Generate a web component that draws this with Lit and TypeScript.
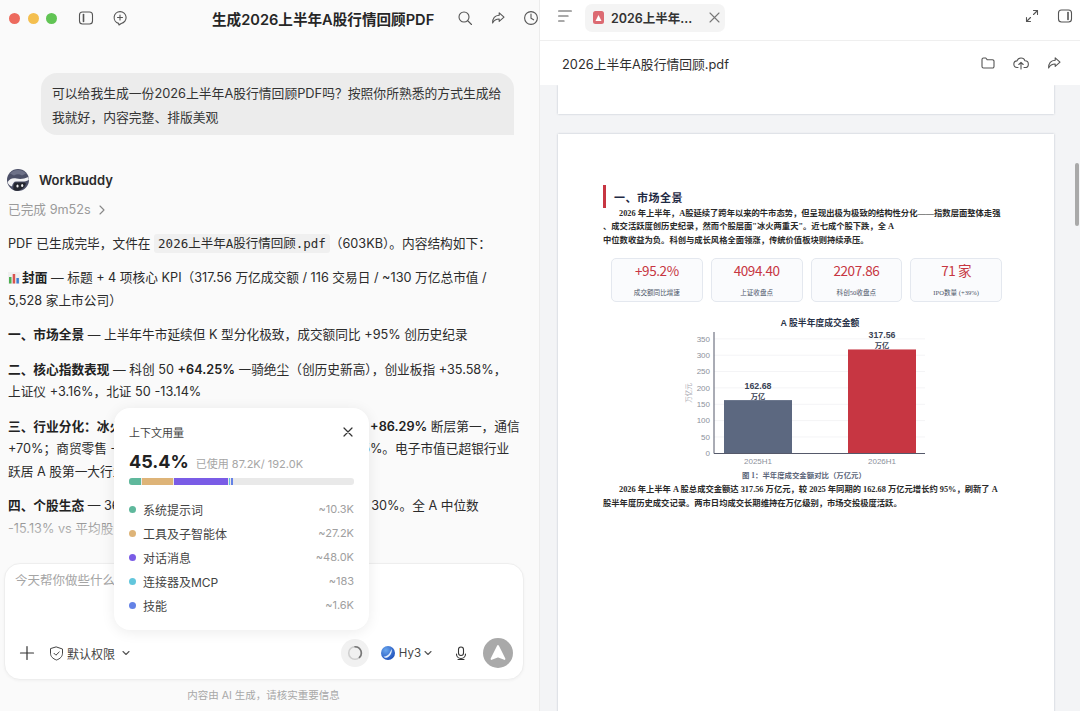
import { LitElement, css, html, svg } from "lit";
import { customElement } from "lit/decorators.js";

const usage = [
  { name: "系统提示词", value: "~10.3K", color: "#5fb89c" },
  { name: "工具及子智能体", value: "~27.2K", color: "#deb478" },
  { name: "对话消息", value: "~48.0K", color: "#7a5ce6" },
  { name: "连接器及MCP", value: "~183", color: "#62c6dc" },
  { name: "技能", value: "~1.6K", color: "#6482e6" },
];

const kpis = [
  { value: "+95.2%", label: "成交额同比增速" },
  { value: "4094.40", label: "上证收盘点" },
  { value: "2207.86", label: "科创50收盘点" },
  { value: "71 家", label: "IPO数量 (+39%)" },
];

const chartY = (v: number) => 138.3 - v * 0.327;

const icon = (body: unknown, size = 16) =>
  html`<svg
    width=${size}
    height=${size}
    viewBox="0 0 16 16"
    fill="none"
    stroke="currentColor"
    stroke-width="1.1"
    stroke-linecap="round"
    stroke-linejoin="round"
  >
    ${body}
  </svg>`;

const shareIcon = svg`<path d="M9.2 2.8 14 7.2l-4.8 4.2V9c-3 0-5 .9-6.6 4 0-4.4 2.2-7.4 6.6-7.7z" />`;

@customElement("app-root")
export class AppRoot extends LitElement {
  public static styles = css`
    :host {
      display: block;
      width: 1080px;
      height: 711px;
      overflow: hidden;
      font-family: Inter, "Noto Sans CJK SC", sans-serif;
      color: #2b2b2b;
    }

    .window {
      display: flex;
      height: 711px;
    }

    /* left: conversation */
    .chat {
      position: relative;
      display: flex;
      flex-direction: column;
      width: 539px;
      background: #fafafa;
      border-right: 1px solid #ececec;
    }

    .chat-header {
      display: flex;
      flex: none;
      align-items: center;
      height: 36px;
      padding-left: 9px;
      overflow: hidden;
      color: #555;
    }

    .chat-header svg {
      flex: none;
    }

    .lights {
      display: flex;
      flex: none;
      gap: 7.5px;
      margin-right: 21px;
    }

    .lights i {
      width: 11px;
      height: 11px;
      border-radius: 50%;
    }

    .header-gap {
      flex: none;
      width: 18px;
    }

    .chat-title {
      flex: none;
      margin: 0 23px 0 84px;
      font-size: 14.6px;
      font-weight: 600;
      color: #262626;
      white-space: nowrap;
    }

    .header-icons {
      display: flex;
      gap: 17px;
      flex: none;
    }

    .messages {
      position: relative;
      flex: 1;
      min-height: 0;
      padding: 37px 8px 0;
      overflow: hidden;
      font-size: 12.7px;
      line-height: 22.5px;
      white-space: nowrap;
    }

    .bubble {
      width: 449px;
      margin-left: 33px;
      padding: 8.5px 13px 5.5px 11px;
      background: #ececec;
      border-radius: 16px 16px 0 16px;
      font-size: 12.8px;
      line-height: 24px;
      color: #333;
    }

    .agent {
      display: flex;
      align-items: center;
      gap: 10px;
      margin: 34px 0 0 -1px;
      font-size: 13px;
      font-weight: 600;
      line-height: 22px;
    }

    .elapsed {
      display: flex;
      align-items: center;
      gap: 6px;
      margin: 8px 0 11.5px;
      color: #9a9a9a;
      line-height: 22px;
    }

    .messages p {
      margin: 0 0 12px;
    }

    .messages b {
      font-weight: 600;
      color: #222;
    }

    code {
      padding: 2px 4px;
      background: #f0f0f0;
      border-radius: 3px;
      font-family: "DejaVu Sans Mono", "Noto Sans CJK SC", monospace;
      font-size: 12.5px;
    }

    .chart-emoji {
      vertical-align: -2px;
      margin-right: 2px;
    }

    .dim {
      color: #777;
    }

    .fade {
      position: absolute;
      left: 0;
      right: 0;
      bottom: 0;
      height: 50px;
      background: linear-gradient(to bottom, rgba(250, 250, 250, 0), #fafafa 80%);
    }

    .composer {
      position: relative;
      display: flex;
      flex: none;
      flex-direction: column;
      justify-content: space-between;
      height: 117px;
      margin: 0 15px 0 4px;
      box-sizing: border-box;
      background: #fff;
      border: 1px solid #eee;
      border-radius: 16px;
      box-shadow: 0 1px 3px rgba(0, 0, 0, 0.04);
    }

    .placeholder {
      padding: 7px 10px;
      font-size: 12.5px;
      line-height: 20px;
      color: #a5a5a5;
    }

    .toolbar {
      display: flex;
      align-items: center;
      height: 30px;
      padding: 0 10px 11px 14px;
      font-size: 12px;
      color: #444;
    }

    .plus-gap {
      width: 14px;
    }

    .perm {
      margin-left: 3px;
    }

    .perm-chevron {
      margin-left: 6px;
    }

    .spacer {
      flex: 1;
    }

    .spinner {
      display: flex;
      align-items: center;
      justify-content: center;
      width: 28px;
      height: 28px;
      margin-right: 12px;
      border-radius: 50%;
      background: #f1f1f1;
    }

    .model {
      margin-left: 4px;
      font-size: 11.5px;
    }

    .model-chevron {
      margin-left: 2px;
    }

    .mic {
      margin-left: 21px;
    }

    .send {
      display: flex;
      align-items: center;
      justify-content: center;
      width: 30px;
      height: 30px;
      margin-left: 15px;
      border-radius: 50%;
      background: #a9a9a9;
    }

    .disclaimer {
      flex: none;
      height: 31px;
      padding-right: 12px;
      font-size: 10.5px;
      line-height: 31px;
      text-align: center;
      color: #a8a8a8;
    }

    /* context usage popover */
    .usage {
      position: absolute;
      left: 114px;
      top: 408px;
      z-index: 2;
      width: 255px;
      height: 222px;
      box-sizing: border-box;
      padding: 15px 15px 0;
      background: #fff;
      border-radius: 16px;
      box-shadow: 0 2px 14px rgba(0, 0, 0, 0.08);
    }

    .usage-head {
      display: flex;
      align-items: center;
      justify-content: space-between;
      height: 18px;
      font-size: 11px;
      color: #444;
    }

    .usage-total {
      display: flex;
      align-items: baseline;
      gap: 7px;
      height: 30px;
      margin-top: 6px;
      font-size: 11px;
      line-height: 30px;
      color: #a6a6a6;
    }

    .usage-total strong {
      font-size: 18px;
      font-weight: 700;
      color: #222;
    }

    .usage-bar {
      display: flex;
      gap: 1px;
      height: 7px;
      margin-top: 1px;
      overflow: hidden;
      background: #e9e9e9;
      border-radius: 3px;
    }

    .usage-bar i {
      display: block;
      height: 100%;
    }

    .usage-rows {
      margin-top: 12px;
    }

    .usage-row {
      display: flex;
      align-items: center;
      height: 24px;
      font-size: 12px;
      color: #444;
    }

    .usage-row i {
      width: 7px;
      height: 7px;
      margin-right: 7px;
      border-radius: 50%;
    }

    .usage-row span {
      margin-left: auto;
      font-size: 11px;
      color: #a0a0a0;
    }

    /* right: file preview */
    .preview {
      display: flex;
      flex: 1;
      flex-direction: column;
      min-width: 0;
      background: #fff;
    }

    .tabbar {
      display: flex;
      flex: none;
      align-items: center;
      gap: 13px;
      height: 32px;
      padding: 0 7px 8px 18px;
      border-bottom: 1px solid #efefef;
      color: #555;
    }

    .tab {
      display: flex;
      align-items: center;
      gap: 7px;
      width: 140px;
      height: 28px;
      margin-top: 3px;
      padding-left: 8px;
      box-sizing: border-box;
      background: #f4f4f4;
      border-radius: 7px;
      font-size: 12.5px;
      font-weight: 600;
      color: #333;
      white-space: nowrap;
    }

    .tab svg:last-child {
      margin-left: 10px;
      color: #777;
    }

    .tabbar .right {
      display: flex;
      gap: 17px;
      margin-left: auto;
    }

    .filebar {
      display: flex;
      flex: none;
      align-items: center;
      justify-content: space-between;
      height: 44px;
      padding: 0 18px 0 22px;
      font-size: 12.8px;
      color: #2f2f2f;
    }

    .filebar div {
      display: flex;
      gap: 17px;
      color: #555;
    }

    .viewer {
      position: relative;
      flex: 1;
      min-height: 0;
      overflow: hidden;
      padding-left: 18px;
      background: #f3f4f6;
    }

    .sheet {
      width: 496px;
      background: #fff;
      box-shadow: 0 0 2px rgba(120, 130, 150, 0.45);
    }

    .sheet.prev {
      height: 29px;
    }

    .sheet.page {
      height: 700px;
      margin-top: 20px;
      padding: 51px 52px 0 45px;
      box-sizing: border-box;
      font-family: "Liberation Serif", "Noto Sans CJK SC", serif;
      font-size: 8.3px;
      font-weight: 700;
      line-height: 13.4px;
      color: #2a2a2a;
      white-space: nowrap;
    }

    .thumb {
      position: absolute;
      top: 78px;
      right: 1px;
      width: 4.5px;
      height: 63px;
      border-radius: 3px;
      background: #a9a9a9;
    }

    .sheet h2 {
      display: flex;
      align-items: center;
      height: 23px;
      margin: 0 0 -1px;
      padding: 3px 0 0 8px;
      box-sizing: border-box;
      border-left: 3px solid #c73642;
      font-family: "Noto Sans CJK SC", sans-serif;
      font-size: 11px;
      font-weight: 700;
      letter-spacing: 0.5px;
      color: #1f2a44;
    }

    .sheet p {
      margin: 0;
    }

    .indent {
      text-indent: 16px;
    }

    .kpis {
      display: grid;
      grid-template-columns: repeat(4, 1fr);
      gap: 8px;
      margin: 11px 0 0 8px;
    }

    .kpi {
      height: 44px;
      box-sizing: border-box;
      padding-top: 1px;
      background: #fafbfd;
      border: 1px solid #e4e8ef;
      border-radius: 5px;
      text-align: center;
    }

    .kpi strong {
      display: block;
      font-family: "Noto Sans CJK SC", sans-serif;
      font-size: 13.5px;
      font-weight: 400;
      line-height: 20px;
      letter-spacing: -0.4px;
      color: #c73642;
    }

    .kpi span {
      display: block;
      margin-top: 8px;
      font-size: 6.6px;
      font-weight: 400;
      line-height: 10px;
      color: #4a5568;
    }

    .chart {
      display: block;
      margin-top: 13px;
    }

    .chart text {
      font-family: "Liberation Sans", "Noto Sans CJK SC", sans-serif;
    }

    .caption {
      padding-left: 3px;
      font-size: 7.4px;
      line-height: 14px;
      text-align: center;
      color: #5a6478;
    }

    .after-chart {
      margin-top: 12px;
    }
  `;

  private renderChart() {
    const ticks = [0, 50, 100, 150, 200, 250, 300, 350];
    const bars = [
      { x: 121, v: 162.68, color: "#5c6880", label: "2025H1" },
      { x: 245, v: 317.56, color: "#c73642", label: "2026H1" },
    ];
    return html`<svg class="chart" width="399" height="154" viewBox="0 0 399 154">
      <text x="217" y="11" text-anchor="middle" font-size="8.8" font-weight="700" fill="#2a3348">A 股半年度成交金额</text>
      ${ticks.map(
        (t) => svg`
          ${t > 0
            ? svg`<line x1="111" x2="322" y1=${chartY(t)} y2=${chartY(t)} stroke="#f4f4f6" />`
            : null}
          <text x="107" y=${chartY(t) + 2.8} text-anchor="end" font-size="8" font-weight="400" fill="#8d919c">${t}</text>`
      )}
      <text transform="translate(88 78) rotate(-90)" text-anchor="middle" font-size="6.5" font-weight="400" fill="#a8a8b0">万亿元</text>
      ${bars.map(
        (b) => svg`
          <rect x=${b.x} y=${chartY(b.v)} width="68" height=${138.3 - chartY(b.v)} fill=${b.color} />
          <text x=${b.x + 34} y=${chartY(b.v) - 11.5} text-anchor="middle" font-size="8.8" font-weight="700" fill="#3a4254">${b.v}</text>
          <text x=${b.x + 34} y=${chartY(b.v) - 1.5} text-anchor="middle" font-size="7.2" font-weight="700" fill="#3a4254">万亿</text>
          <text x=${b.x + 34} y="149" text-anchor="middle" font-size="8" font-weight="400" fill="#8d919c">${b.label}</text>`
      )}
      <line x1="111" x2="111" y1="17" y2="138.5" stroke="#55596a" />
      <line x1="111" x2="322" y1="138.5" y2="138.5" stroke="#55596a" />
    </svg>`;
  }

  private renderUsage() {
    return html`<div class="usage">
      <div class="usage-head">
        上下文用量
        <svg width="12" height="12" viewBox="0 0 12 12" stroke="#333" stroke-width="1.2" stroke-linecap="round">
          <path d="M2 2l8 8M10 2l-8 8" />
        </svg>
      </div>
      <div class="usage-total"><strong>45.4%</strong> 已使用 87.2K/ 192.0K</div>
      <div class="usage-bar">
        <i style="width:12px;background:#5fb89c"></i>
        <i style="width:31px;background:#deb478"></i>
        <i style="width:54px;background:#7a5ce6"></i>
        <i style="width:1px;background:#62c6dc"></i>
        <i style="width:2px;background:#6482e6"></i>
      </div>
      <div class="usage-rows">
        ${usage.map(
          (u) => html`<div class="usage-row">
            <i style="background:${u.color}"></i>${u.name}<span>${u.value}</span>
          </div>`
        )}
      </div>
    </div>`;
  }

  public render() {
    return html`<div class="window">
      <section class="chat">
        <header class="chat-header">
          <div class="lights">
            <i style="background:#ed6a5e"></i>
            <i style="background:#f4bf4f"></i>
            <i style="background:#61c454"></i>
          </div>
          ${icon(svg`<rect x="1.5" y="2" width="13" height="12" rx="3" /><path d="M5.5 4.5v7" stroke-width="1.6" />`)}
          <span class="header-gap"></span>
          ${icon(svg`<path d="M8 1.6a6 6 0 0 1 1.2 11.9L7 15l-.4-1.6A6 6 0 0 1 8 1.6z" /><path d="M8 5v5M5.5 7.5h5" />`)}
          <h1 class="chat-title">生成2026上半年A股行情回顾PDF</h1>
          <div class="header-icons">
            ${icon(svg`<circle cx="7" cy="7" r="5" /><path d="m11 11 3.5 3.5" />`)}
            ${icon(shareIcon)}
            ${icon(svg`<circle cx="8" cy="8" r="6.4" /><path d="M8 4v4.3l2.6 1.5" />`)}
          </div>
        </header>

        <div class="messages">
          <div class="bubble">
            可以给我生成一份2026上半年A股行情回顾PDF吗？按照你所熟悉的方式生成给<br />我就好，内容完整、排版美观
          </div>
          <div class="agent">
            <svg width="22" height="22" viewBox="0 0 22 22">
              <circle cx="11" cy="11" r="11" fill="#4c5068" />
              <path d="M3 4.5a11 11 0 0 1 16 0L15 6.5a8 8 0 0 0-8 0z" fill="#6d7188" />
              <path d="M.6 13c2-3 4.5-4.5 9-3.5 3 .7 7.5.6 11.8-1.5l.4 3c-2.5 1-4 1.5-5.8 1.5H9c-2 0-3.5 2-4 5-2.5-1-4-2.5-4.4-4.5z" fill="#f2f2f4" />
              <path d="M8 13.5h9.5c1 0 1.5.8 1.2 1.8-1 3-3.7 5.6-7.7 6.5-2 .2-3.5-.3-4.5-1-.5-3 0-6 1.5-7.3z" fill="#24262f" />
              <ellipse cx="10.5" cy="17" rx="1.1" ry="1.5" fill="#f2f2f4" />
              <ellipse cx="15.2" cy="16.5" rx="1.1" ry="1.5" fill="#f2f2f4" />
            </svg>
            WorkBuddy
          </div>
          <div class="elapsed">
            已完成 9m52s
            <svg width="9" height="10" viewBox="0 0 9 10" fill="none" stroke="#888" stroke-width="1.1" stroke-linecap="round" stroke-linejoin="round"><path d="m3 1 4 4-4 4" /></svg>
          </div>
          <p>PDF 已生成完毕，文件在 <code>2026上半年A股行情回顾.pdf</code>（603KB）。内容结构如下：</p>
          <p>
            <svg class="chart-emoji" width="12" height="12" viewBox="0 0 12 12">
              <rect width="12" height="12" fill="#f0f0f0" />
              <rect x="1" y="5" width="2.5" height="6.5" fill="#4caf50" />
              <rect x="4.7" y="2" width="2.5" height="9.5" fill="#d9534f" />
              <rect x="8.4" y="6" width="2.5" height="5.5" fill="#3f7fd0" />
            </svg><b>封面</b> — 标题 + 4 项核心 KPI（317.56 万亿成交额 / 116 交易日 / ~130 万亿总市值 /<br />5,528 家上市公司）
          </p>
          <p><b>一、市场全景</b> — 上半年牛市延续但 K 型分化极致，成交额同比 +95% 创历史纪录</p>
          <p>
            <b>二、核心指数表现</b> — 科创 50 <b>+64.25%</b> 一骑绝尘（创历史新高），创业板指 +35.58%，<br />上证仪 +3.16%，北证 50 -13.14%
          </p>
          <p>
            <b>三、行业分化：冰火两重天</b> — 有色金属领涨，光通信 CPO 板块 <b>+86.29%</b> 断层第一，通信<br />+70%；商贸零售 -21%，房地产、食品饮料等传统板块跌幅超15%。电子市值已超银行业<br />跃居 A 股第一大行业
          </p>
          <p>
            <b>四、个股生态</b> — 3600 余只个股全线下跌，翻倍股数量占比不足 30%。全 A 中位数<br /><span class="dim">-15.13% vs 平均股价涨幅差距显著</span>
          </p>
          <p>五、资金面与政策环境 — 融资余额创新高，险资与外资持续流入市场</p>
          <div class="fade"></div>
        </div>

        <div class="composer">
          <div class="placeholder">今天帮你做些什么？</div>
          <div class="toolbar">
            <svg width="16" height="16" viewBox="0 0 16 16" fill="none" stroke="#333" stroke-width="1.2" stroke-linecap="round"><path d="M8 1.5v13M1.5 8h13" /></svg>
            <span class="plus-gap"></span>
            <svg width="15" height="15" viewBox="0 0 15 15" fill="none" stroke="#444" stroke-width="1" stroke-linecap="round" stroke-linejoin="round"><path d="M7.5 1 13.5 3v4.2c0 3.4-2.5 5.6-6 6.8-3.5-1.2-6-3.4-6-6.8V3z" /><path d="m5 7.3 1.9 1.9L10.2 6" /></svg>
            <span class="perm">默认权限</span>
            <svg class="perm-chevron" width="10" height="10" viewBox="0 0 10 10" fill="none" stroke="#555" stroke-width="1.1" stroke-linecap="round" stroke-linejoin="round"><path d="m2 3.5 3 3 3-3" /></svg>
            <span class="spacer"></span>
            <div class="spinner">
              <svg width="16" height="16" viewBox="0 0 16 16" fill="none" stroke-width="1.6">
                <circle cx="8" cy="8" r="6.3" stroke="#cfcfcf" />
                <path d="M8 1.7a6.3 6.3 0 0 1 4.5 10.7" stroke="#777" stroke-linecap="round" />
              </svg>
            </div>
            <svg width="14" height="14" viewBox="0 0 14 14">
              <defs>
                <radialGradient id="globe" cx="0.35" cy="0.3" r="0.85">
                  <stop offset="0" stop-color="#6aa6ee" />
                  <stop offset="1" stop-color="#1445b4" />
                </radialGradient>
              </defs>
              <circle cx="7" cy="7" r="7" fill="url(#globe)" />
              <path d="M2.5 10.5c3 .3 6.5-2 8-7.5 1 3-1 7.5-5 8.8-1.3.2-2.3-.4-3-1.3z" fill="#e8f2ff" />
            </svg>
            <span class="model">Hy3</span>
            <svg class="model-chevron" width="10" height="10" viewBox="0 0 10 10" fill="none" stroke="#555" stroke-width="1.1" stroke-linecap="round" stroke-linejoin="round"><path d="m2 3.5 3 3 3-3" /></svg>
            <svg class="mic" width="14" height="15" viewBox="0 0 14 15" fill="none" stroke="#333" stroke-width="1.1" stroke-linecap="round"><rect x="4.5" y="1" width="5" height="8.5" rx="2.5" /><path d="M2.5 8a4.5 4.5 0 0 0 9 0M4 13.5h6M7 12.5v1" /></svg>
            <div class="send">
              <svg width="20" height="20" viewBox="0 0 20 20" fill="#fff" stroke="#fff" stroke-width="1.8" stroke-linejoin="round"><path d="M10 3 16.5 16 10 13.5 3.5 16z" /></svg>
            </div>
          </div>
        </div>
        <div class="disclaimer">内容由 AI 生成，请核实重要信息</div>
        ${this.renderUsage()}
      </section>

      <section class="preview">
        <div class="tabbar">
          <svg width="14" height="12" viewBox="0 0 14 12" fill="none" stroke="#555" stroke-width="1.1" stroke-linecap="round"><path d="M.6 1h12.8M.6 6h9.5M.6 11h5.5" /></svg>
          <div class="tab">
            <svg width="11" height="13" viewBox="0 0 11 13"><rect width="11" height="13" rx="2.5" fill="#dc6a72" /><path d="M5.5 4 8.5 10h-6z" fill="#fff" /></svg>
            2026上半年...
            <svg width="11" height="11" viewBox="0 0 11 11" stroke="currentColor" stroke-width="1.1" stroke-linecap="round"><path d="m1 1 9 9M10 1l-9 9" /></svg>
          </div>
          <div class="right">
            ${icon(svg`<path d="M9.5 2.5h4v4M13.5 2.5l-4 4M6.5 13.5h-4v-4M2.5 13.5l4-4" />`)}
            ${icon(svg`<rect x="1.5" y="2" width="13" height="12" rx="3" /><path d="M11 4.5v7" stroke-width="1.6" />`)}
          </div>
        </div>
        <div class="filebar">
          2026上半年A股行情回顾.pdf
          <div>
            ${icon(svg`<path d="M2 4.5A1.5 1.5 0 0 1 3.5 3h2.3l1.5 1.8h5.2A1.5 1.5 0 0 1 14 6.3v5.2a1.5 1.5 0 0 1-1.5 1.5h-9A1.5 1.5 0 0 1 2 11.5z" />`)}
            ${icon(svg`<path d="M5 12.5h-.7a3.3 3.3 0 0 1-.3-6.6 4.2 4.2 0 0 1 8-.1 3.3 3.3 0 0 1 0 6.7h-1" /><path d="M8 14V7.5M5.8 9.5 8 7.3l2.2 2.2" />`)}
            ${icon(shareIcon)}
          </div>
        </div>
        <div class="viewer">
          <div class="sheet prev"></div>
          <div class="sheet page">
            <h2>一、市场全景</h2>
            <p class="indent">
              2026 年上半年，A股延续了跨年以来的牛市态势，但呈现出极为极致的结构性分化——指数层面整体走强<br />、成交活跃度创历史纪录，然而个股层面"冰火两重天"。近七成个股下跌，全 A<br />中位数收益为负。科创与成长风格全面领涨，传统价值板块则持续承压。
            </p>
            <div class="kpis">
              ${kpis.map(
                (k) => html`<div class="kpi"><strong>${k.value}</strong><span>${k.label}</span></div>`
              )}
            </div>
            ${this.renderChart()}
            <div class="caption">图 1：半年度成交金额对比（万亿元）</div>
            <p class="indent after-chart">
              2026 年上半年 A 股总成交金额达 317.56 万亿元，较 2025 年同期的 162.68 万亿元增长约 95%，刷新了 A<br />股半年度历史成交记录。两市日均成交长期维持在万亿级别，市场交投极度活跃。
            </p>
          </div>
          <div class="thumb"></div>
        </div>
      </section>
    </div>`;
  }
}
